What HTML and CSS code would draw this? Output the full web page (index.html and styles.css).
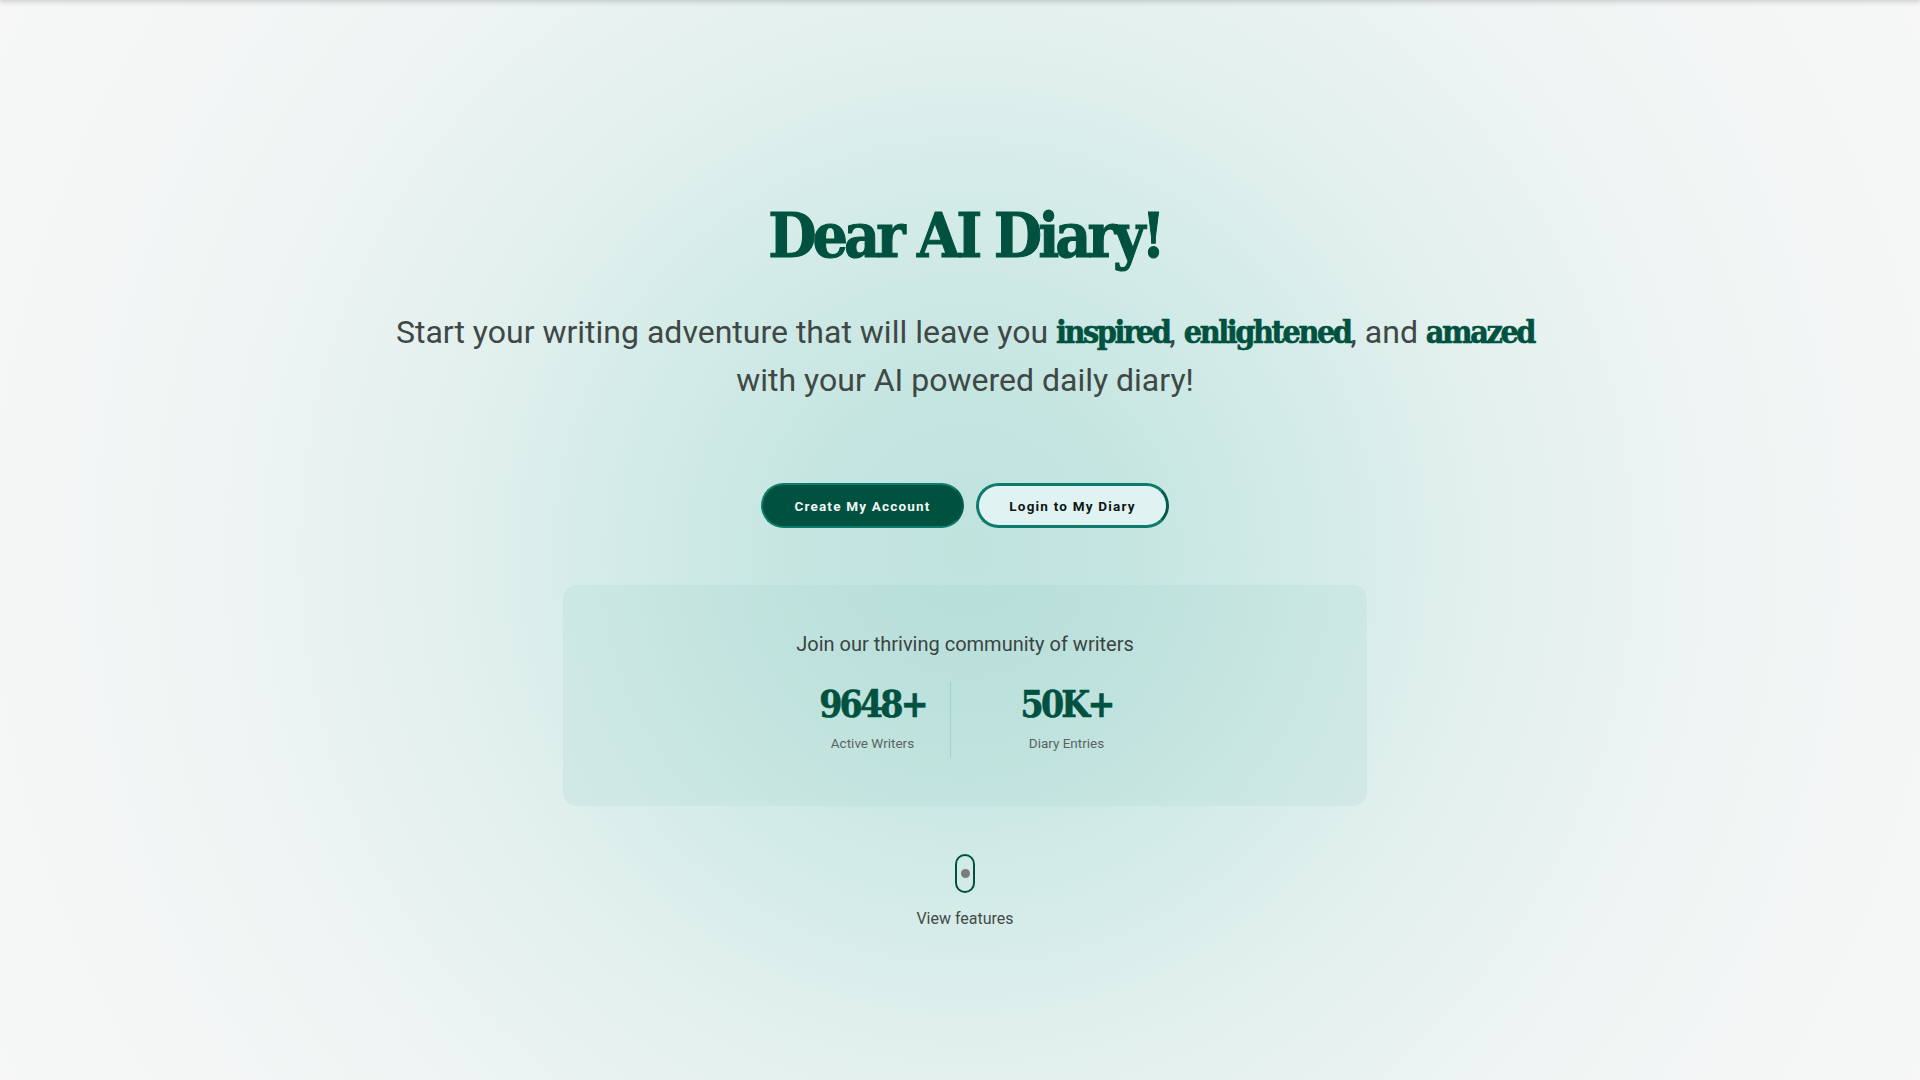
FILE: index.html
```html
<!DOCTYPE html>
<html lang="en">
<head>
<meta charset="utf-8">
<title>Dear AI Diary!</title>
<link rel="stylesheet" href="styles.css">
</head>
<body>
<header class="topbar"></header>
<main class="hero">
  <h1 class="title">Dear AI Diary!</h1>
  <p class="subtitle">Start your writing adventure that will leave you <strong>inspired</strong>, <strong>enlightened</strong>, and <strong>amazed</strong> with your AI powered daily diary!</p>
  <div class="actions">
    <a class="btn btn-primary" href="#">Create My Account</a>
    <a class="btn btn-outline" href="#">Login to My Diary</a>
  </div>
  <section class="community">
    <p class="community-text">Join our thriving community of writers</p>
    <div class="stats">
      <div class="stat stat-left">
        <div class="stat-num">9648+</div>
        <div class="stat-label">Active Writers</div>
      </div>
      <div class="stat-divider"></div>
      <div class="stat stat-right">
        <div class="stat-num">50K+</div>
        <div class="stat-label">Diary Entries</div>
      </div>
    </div>
  </section>
  <a class="scroll" href="#">
    <span class="mouse"><span class="mouse-dot"></span></span>
    <span class="scroll-text">View features</span>
  </a>
</main>
</body>
</html>
```
FILE: styles.css
```css
* { box-sizing: border-box; }
html, body { margin: 0; padding: 0; }
body {
  min-height: 1080px;
  font-family: Roboto, "Liberation Sans", sans-serif;
  color: #3f4a48;
  background: radial-gradient(circle at 50.3% 51%, #c0e3de 0px, #c5e5e1 160px, #d2ebe7 330px, #e2f0ee 520px, #edf4f3 720px, #f4f6f6 930px, #f7f7f7 1150px);
  overflow: hidden;
}
.topbar {
  position: fixed;
  top: -60px;
  left: 0;
  right: 0;
  height: 60px;
  box-shadow: 0 1px 6px rgba(0, 0, 0, 0.22);
  background: #f7f7f7;
}
.hero {
  display: flex;
  flex-direction: column;
  align-items: center;
  padding: 196px 0 0 10px;
}
.title {
  margin: 0;
  font-family: "DejaVu Serif", serif;
  font-stretch: condensed;
  font-weight: 700;
  font-size: 62px;
  line-height: 80px;
  letter-spacing: -4px;
  color: #00513f;
  -webkit-text-stroke: 1px #00513f;
}
.subtitle {
  margin: 32px 0 0;
  max-width: 1170px;
  text-align: center;
  font-size: 32px;
  line-height: 48px;
  color: #404846;
}
.subtitle strong {
  font-family: "DejaVu Serif", serif;
  font-stretch: condensed;
  font-weight: 700;
  letter-spacing: -2.4px;
  color: #00513f;
  -webkit-text-stroke: 0.6px #00513f;
}
.actions {
  display: flex;
  gap: 12px;
  margin-top: 79px;
}
.btn {
  display: inline-flex;
  align-items: center;
  justify-content: center;
  height: 45px;
  border-radius: 999px;
  font-size: 13.5px;
  font-weight: 700;
  letter-spacing: 1.2px;
  text-decoration: none;
}
.btn-primary {
  width: 203px;
  background: #00513f;
  color: #f2f7f6;
  border: 2px solid #0a7d6c;
  border-right-color: #03604f;
}
.btn-outline {
  width: 193px;
  background: #e0f2f1;
  color: #0b1614;
  border: 3px solid #0b7c6c;
  border-right-color: #045b4d;
}
.community {
  margin-top: 57px;
  width: 804px;
  padding: 45px 32px 49px;
  border-radius: 14px;
  background: rgba(150, 205, 199, 0.16);
  display: flex;
  flex-direction: column;
  align-items: center;
}
.community-text {
  margin: 0;
  font-size: 20px;
  line-height: 28px;
  font-weight: 400;
  color: #3a4442;
}
.stats {
  display: flex;
  margin-top: 24px;
  padding-left: 48px;
}
.stat {
  display: flex;
  flex-direction: column;
  align-items: center;
}
.stat-left { width: 154px; }
.stat-right { width: 232px; }
.stat-divider {
  width: 1px;
  background: #9fd3cc;
}
.stat-num {
  font-family: "DejaVu Serif", serif;
  font-stretch: condensed;
  font-weight: 700;
  font-size: 37px;
  line-height: 44px;
  letter-spacing: -2.8px;
  color: #00513f;
  -webkit-text-stroke: 0.6px #00513f;
}
.stat-label {
  margin-top: 7px;
  font-size: 13.5px;
  line-height: 20px;
  color: #5a6361;
  padding-bottom: 4px;
}
.scroll {
  margin-top: 48px;
  display: flex;
  flex-direction: column;
  align-items: center;
  text-decoration: none;
}
.mouse {
  width: 20px;
  height: 39px;
  border: 2px solid #00513f;
  border-radius: 10px;
  display: flex;
  align-items: center;
  justify-content: center;
}
.mouse-dot {
  width: 9px;
  height: 9px;
  border-radius: 50%;
  background: #7c7c7c;
}
.scroll-text {
  margin-top: 16px;
  font-size: 16px;
  line-height: 20px;
  color: #444a49;
}
```
